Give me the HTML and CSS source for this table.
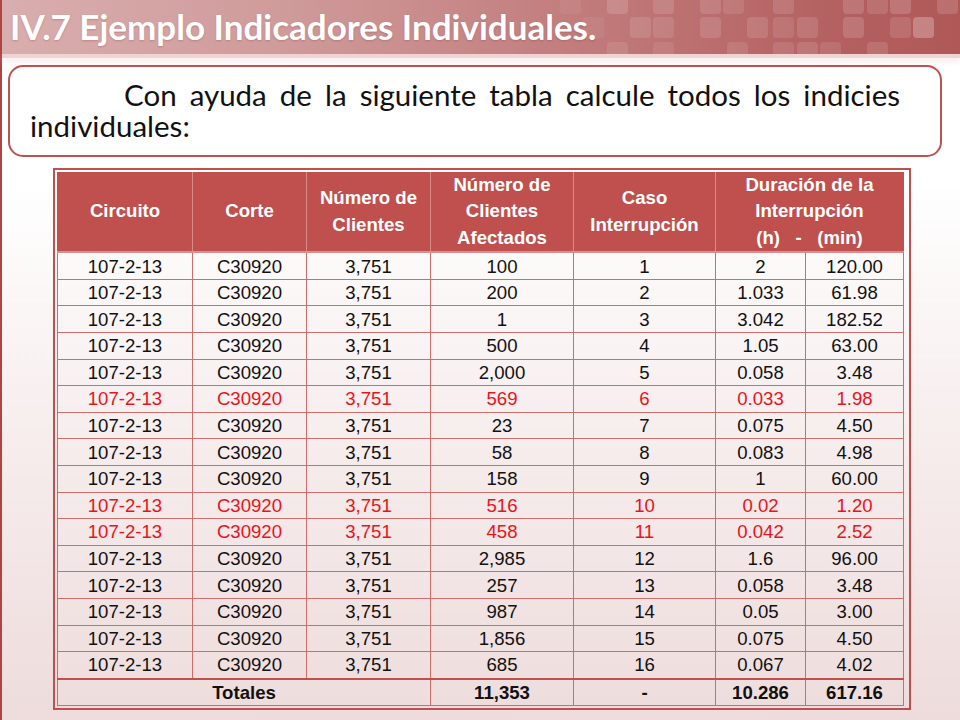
FILE: index.html
```html
<!DOCTYPE html>
<html lang="es">
<head>
<meta charset="utf-8">
<title>IV.7 Ejemplo Indicadores Individuales.</title>
<link rel="stylesheet" href="styles.css">
</head>
<body>
<div class="slide">
  <header class="band">
    <h1 class="title">IV.7 Ejemplo Indicadores Individuales.</h1>
    <svg class="tiles" width="480" height="54" viewBox="480 0 480 54" aria-hidden="true">
      <g fill="#ffffff">
        <rect x="560" y="-6" width="21" height="20" rx="4" opacity=".06"/>
        <rect x="607" y="-6" width="21" height="20" rx="4" opacity=".14"/>
        <rect x="653" y="-6" width="21" height="20" rx="4" opacity=".12"/>
        <rect x="700" y="-6" width="21" height="20" rx="4" opacity=".13"/>
        <rect x="723" y="-6" width="21" height="20" rx="4" opacity=".1"/>
        <rect x="773" y="-6" width="21" height="20" rx="4" opacity=".12"/>
        <rect x="843" y="-6" width="21" height="20" rx="4" opacity=".14"/>
        <rect x="867" y="-6" width="21" height="20" rx="4" opacity=".12"/>
        <rect x="890" y="-6" width="21" height="20" rx="4" opacity=".16"/>
        <rect x="937" y="-6" width="21" height="20" rx="4" opacity=".14"/>

        <rect x="583" y="17" width="21" height="21" rx="4" opacity=".06"/>
        <rect x="630" y="17" width="21" height="21" rx="4" opacity=".12"/>
        <rect x="653" y="17" width="21" height="21" rx="4" opacity=".1"/>
        <rect x="700" y="17" width="21" height="21" rx="4" opacity=".12"/>
        <rect x="747" y="17" width="21" height="21" rx="4" opacity=".12"/>
        <rect x="773" y="17" width="21" height="21" rx="4" opacity=".1"/>
        <rect x="797" y="17" width="21" height="21" rx="4" opacity=".12"/>
        <rect x="843" y="17" width="21" height="21" rx="4" opacity=".14"/>
        <rect x="890" y="17" width="21" height="21" rx="4" opacity=".12"/>
        <rect x="913" y="17" width="21" height="21" rx="4" opacity=".26"/>

        <rect x="607" y="42" width="21" height="20" rx="4" opacity=".1"/>
        <rect x="653" y="42" width="21" height="20" rx="4" opacity=".08"/>
        <rect x="727" y="42" width="21" height="20" rx="4" opacity=".1"/>
        <rect x="773" y="42" width="21" height="20" rx="4" opacity=".1"/>
        <rect x="797" y="42" width="21" height="20" rx="4" opacity=".12"/>
        <rect x="820" y="42" width="21" height="20" rx="4" opacity=".1"/>
        <rect x="867" y="42" width="21" height="20" rx="4" opacity=".12"/>
      </g>
    </svg>
  </header>
  <div class="sep"></div>
  <main class="content">
    <div class="box">
      <p class="lead">Con ayuda de la siguiente tabla calcule todos los indicies individuales:</p>
    </div>
    <div class="frame">
      <table class="grid">
        <colgroup>
          <col class="c1"><col class="c2"><col class="c3"><col class="c4"><col class="c5"><col class="c6"><col class="c7">
        </colgroup>
        <thead>
          <tr>
            <th>Circuito</th>
            <th>Corte</th>
            <th>Número de<br>Clientes</th>
            <th>Número de<br>Clientes<br>Afectados</th>
            <th>Caso<br>Interrupción</th>
            <th colspan="2">Duración de la<br>Interrupción<br><span class="pre">(h)   -   (min)</span></th>
          </tr>
        </thead>
        <tbody>
          <tr><td>107-2-13</td><td>C30920</td><td>3,751</td><td>100</td><td>1</td><td>2</td><td>120.00</td></tr>
          <tr><td>107-2-13</td><td>C30920</td><td>3,751</td><td>200</td><td>2</td><td>1.033</td><td>61.98</td></tr>
          <tr><td>107-2-13</td><td>C30920</td><td>3,751</td><td>1</td><td>3</td><td>3.042</td><td>182.52</td></tr>
          <tr><td>107-2-13</td><td>C30920</td><td>3,751</td><td>500</td><td>4</td><td>1.05</td><td>63.00</td></tr>
          <tr><td>107-2-13</td><td>C30920</td><td>3,751</td><td>2,000</td><td>5</td><td>0.058</td><td>3.48</td></tr>
          <tr class="hl"><td>107-2-13</td><td>C30920</td><td>3,751</td><td>569</td><td>6</td><td>0.033</td><td>1.98</td></tr>
          <tr><td>107-2-13</td><td>C30920</td><td>3,751</td><td>23</td><td>7</td><td>0.075</td><td>4.50</td></tr>
          <tr><td>107-2-13</td><td>C30920</td><td>3,751</td><td>58</td><td>8</td><td>0.083</td><td>4.98</td></tr>
          <tr><td>107-2-13</td><td>C30920</td><td>3,751</td><td>158</td><td>9</td><td>1</td><td>60.00</td></tr>
          <tr class="hl"><td>107-2-13</td><td>C30920</td><td>3,751</td><td>516</td><td>10</td><td>0.02</td><td>1.20</td></tr>
          <tr class="hl"><td>107-2-13</td><td>C30920</td><td>3,751</td><td>458</td><td>11</td><td>0.042</td><td>2.52</td></tr>
          <tr><td>107-2-13</td><td>C30920</td><td>3,751</td><td>2,985</td><td>12</td><td>1.6</td><td>96.00</td></tr>
          <tr><td>107-2-13</td><td>C30920</td><td>3,751</td><td>257</td><td>13</td><td>0.058</td><td>3.48</td></tr>
          <tr><td>107-2-13</td><td>C30920</td><td>3,751</td><td>987</td><td>14</td><td>0.05</td><td>3.00</td></tr>
          <tr><td>107-2-13</td><td>C30920</td><td>3,751</td><td>1,856</td><td>15</td><td>0.075</td><td>4.50</td></tr>
          <tr><td>107-2-13</td><td>C30920</td><td>3,751</td><td>685</td><td>16</td><td>0.067</td><td>4.02</td></tr>
        </tbody>
        <tfoot>
          <tr class="total"><td colspan="3">Totales</td><td>11,353</td><td>-</td><td>10.286</td><td>617.16</td></tr>
        </tfoot>
      </table>
    </div>
  </main>
</div>
</body>
</html>
```

FILE: styles.css
```css
html, body {
  margin: 0;
  padding: 0;
}

body {
  width: 960px;
  height: 720px;
  overflow: hidden;
  background: linear-gradient(to bottom, #ffffff 0px, #ffffff 180px, #f7eeee 420px, #eedcdc 720px);
}

.slide {
  width: 958px;
  height: 720px;
  border-left: 2px solid #b04444;
  display: flex;
  flex-direction: column;
}

.band {
  position: relative;
  height: 54px;
  flex: none;
  overflow: hidden;
  background: linear-gradient(to right, #d9aeae 0%, #cf9a9a 30%, #c27c7c 60%, #b56262 85%, #b05858 100%);
  display: flex;
  align-items: center;
}

.title {
  position: relative;
  z-index: 1;
  margin: 0 0 3px 8px;
  font-family: "Lato", "Open Sans", sans-serif;
  font-weight: 700;
  font-size: 35px;
  line-height: 42px;
  color: #ffffff;
  white-space: nowrap;
  text-shadow: 0 1px 2px rgba(120, 40, 40, 0.25);
}

.tiles {
  position: absolute;
  right: 0;
  top: 0;
}

.sep {
  height: 4px;
  flex: none;
  background: #f0d4d4;
  box-shadow: 0 3px 6px rgba(230, 190, 190, 0.45);
}

.content {
  display: flex;
  flex-direction: column;
}

.box {
  margin: 7px 0 0 6px;
  width: 930px;
  height: 88px;
  border: 2px solid #c0504d;
  border-radius: 15px;
  background: #ffffff;
  box-sizing: content-box;
}

.lead {
  margin: 0;
  padding: 12px 40px 0 20px;
  font-family: "Lato", "Open Sans", sans-serif;
  font-size: 29.5px;
  line-height: 31px;
  color: #111111;
  text-align: justify;
  text-indent: 94px;
}

.frame {
  margin: 11px 0 0 51px;
  width: 850px;
  border: 2px solid #c0504d;
  padding: 2px 2px 2px 2px;
}

.grid {
  width: 846px;
  border-collapse: collapse;
  table-layout: fixed;
  font-family: "Liberation Sans", Arial, sans-serif;
  font-size: 18.6px;
  color: #111111;
}

.c1 { width: 135px; }
.c2 { width: 114px; }
.c3 { width: 124px; }
.c4 { width: 143px; }
.c5 { width: 142px; }
.c6 { width: 90px; }
.c7 { width: 98px; }

.grid th {
  background: #c0504d;
  color: #ffffff;
  font-weight: 700;
  font-size: 18.6px;
  line-height: 26.4px;
  height: 79px;
  padding: 0;
  text-align: center;
  border-left: 1px solid #d78c8a;
  border-right: 1px solid #d78c8a;
  border-bottom: 2px solid #d98f8f;
}

.grid th:first-child { border-left: 1px solid #c0504d; }
.grid th:last-child { border-right: 1px solid #c0504d; }

.pre { white-space: pre; }

.grid td {
  padding: 0;
  height: 25.6px;
  line-height: 25px;
  text-align: center;
  border: 1px solid #cf6d6b;
}

.grid tr.hl td {
  color: #e8141c;
}

.grid tr.total td {
  font-weight: 700;
  height: 23px;
  border-top: 2px solid #c0504d;
}
```
